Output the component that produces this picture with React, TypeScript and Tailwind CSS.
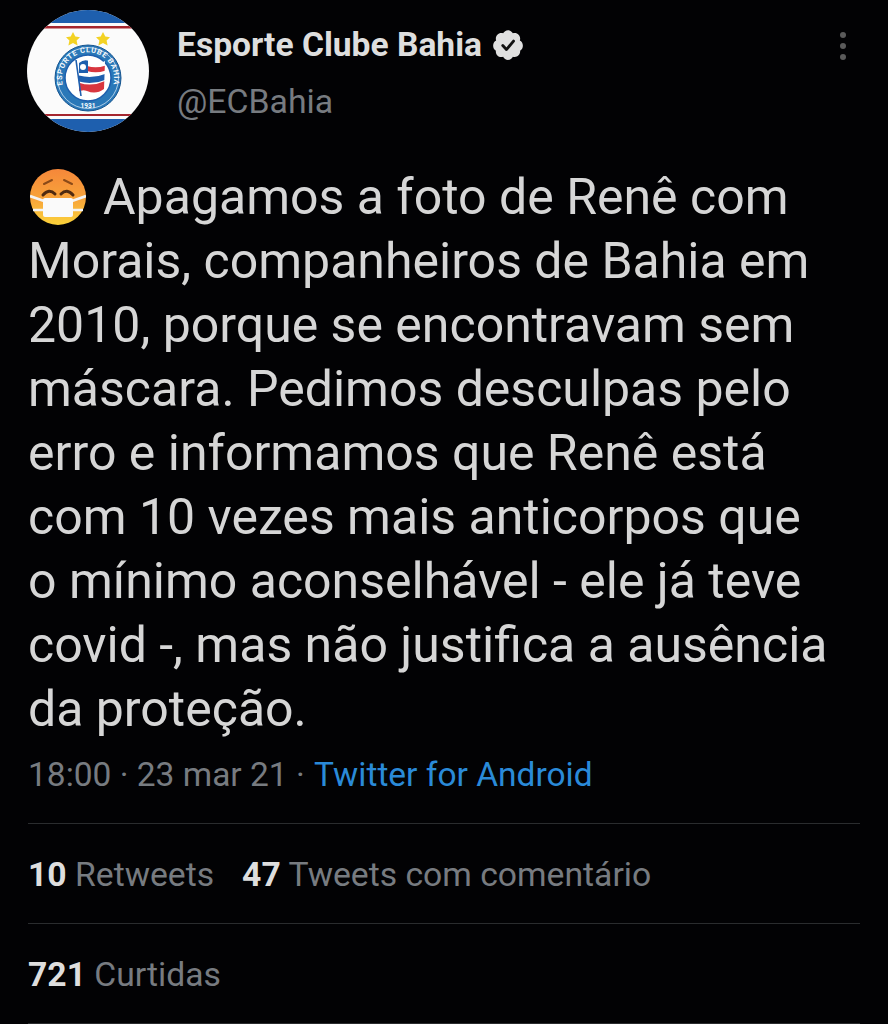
import React from 'react';

const tweetLines = [
  'Morais, companheiros de Bahia em',
  '2010, porque se encontravam sem',
  'máscara. Pedimos desculpas pelo',
  'erro e informamos que Renê está',
  'com 10 vezes mais anticorpos que',
  'o mínimo aconselhável - ele já teve',
  'covid -, mas não justifica a ausência',
  'da proteção.',
];

const Avatar = () => (
  <svg width="122" height="122" viewBox="0 0 122 122" className="shrink-0">
    <defs>
      <clipPath id="disc">
        <circle cx="61" cy="61" r="61" />
      </clipPath>
      <clipPath id="flagClip">
        <path d="M52 53 Q58 48 64 52 Q72 55 78 51 L77 79 Q69 85 60 81 Q55 79 52 82 Z" />
      </clipPath>
      <path id="ring" d="M43 87 A26 26 0 1 1 79 87" />
    </defs>
    <g clipPath="url(#disc)">
      <rect width="122" height="122" fill="#fbfbfb" />
      <rect width="122" height="13" fill="#1e5fae" />
      <rect y="16" width="122" height="2.5" fill="#a5262f" />
      <rect y="104" width="122" height="2" fill="#a5262f" />
      <rect y="109" width="122" height="13" fill="#1e5fae" />
    </g>
    <polygon points="46,22 48.3,26.6 53,27.2 49.6,30.6 50.6,35.5 46,33 41.4,35.5 42.4,30.6 39,27.2 43.7,26.6" fill="#f3d224" />
    <polygon points="76,22 78.3,26.6 83,27.2 79.6,30.6 80.6,35.5 76,33 71.4,35.5 72.4,30.6 69,27.2 73.7,26.6" fill="#f3d224" />
    <circle cx="61" cy="68" r="33" fill="#2a78b8" stroke="#17558f" strokeWidth="1" />
    <circle cx="61" cy="68" r="30.5" fill="none" stroke="#cfe2f0" strokeWidth="0.8" />
    <circle cx="61" cy="68" r="23" fill="#fff" stroke="#1e5fae" strokeWidth="1.5" />
    <text fontFamily="Roboto, sans-serif" fontSize="7.5" fontWeight="700" fill="#f2f6fa" letterSpacing="0.7" textAnchor="middle">
      <textPath href="#ring" startOffset="50%">ESPORTE CLUBE BAHIA</textPath>
    </text>
    <text x="61" y="98" textAnchor="middle" fontFamily="Roboto, sans-serif" fontSize="6.5" fontWeight="700" fill="#fff">1931</text>
    <g clipPath="url(#flagClip)">
      <rect x="50" y="46" width="30" height="42" fill="#fff" />
      <path d="M50 65 Q65 70 80 63 L80 69 Q65 76 50 71 Z" fill="#1e5fae" />
      <path d="M50 72 Q65 78 80 70 L80 79 Q65 88 50 80 Z" fill="#d8363f" />
      <path d="M60 56 Q70 59 80 55 L80 60 Q70 64 60 61 Z" fill="#d8363f" />
      <rect x="50" y="46" width="11" height="17" fill="#1e5fae" />
      <circle cx="56" cy="57" r="3" fill="#fff" />
    </g>
    <path d="M49 50 L54 86" stroke="#1e5fae" strokeWidth="1.6" />
  </svg>
);

const MaskEmoji = () => (
  <svg width="56" height="56" viewBox="0 0 56 56" className="shrink-0">
    <defs>
      <linearGradient id="face" x1="0" y1="0" x2="0" y2="1">
        <stop offset="0" stopColor="#f5873a" />
        <stop offset="0.55" stopColor="#f8a53a" />
        <stop offset="1" stopColor="#fbd23a" />
      </linearGradient>
    </defs>
    <circle cx="28" cy="28" r="28" fill="url(#face)" />
    <path d="M14 15 L22 11 M34 11 L42 15" stroke="#8a4a18" strokeWidth="2" strokeLinecap="round" fill="none" />
    <path d="M13 26 Q19 19 25 25 M31 25 Q37 19 43 26" stroke="#4f2a10" strokeWidth="3" strokeLinecap="round" fill="none" />
    <path d="M0 27 L14 32 M56 27 L42 32 M3 41 L14 41 M53 41 L42 41" stroke="#f4f4f4" strokeWidth="2.6" />
    <rect x="13" y="29" width="30" height="19" rx="2" fill="#fafafa" />
  </svg>
);

const Verified = () => (
  <svg width="34" height="34" viewBox="0 0 24 24" className="shrink-0">
    <path
      fill="#e0e0e0"
      d="M22.5 12.5c0-1.58-.875-2.95-2.148-3.6.154-.435.238-.905.238-1.4 0-2.21-1.71-3.998-3.818-3.998-.47 0-.92.084-1.336.25C14.818 2.415 13.51 1.5 12 1.5s-2.816.917-3.437 2.25c-.415-.165-.866-.25-1.336-.25-2.11 0-3.818 1.79-3.818 4 0 .494.083.964.237 1.4-1.272.65-2.147 2.018-2.147 3.6 0 1.495.782 2.798 1.942 3.486-.02.17-.032.34-.032.514 0 2.21 1.708 4 3.818 4 .47 0 .92-.086 1.335-.25.62 1.334 1.926 2.25 3.437 2.25 1.512 0 2.818-.916 3.437-2.25.415.163.865.248 1.336.248 2.11 0 3.818-1.79 3.818-4 0-.174-.012-.344-.033-.513 1.158-.687 1.943-1.99 1.943-3.484z"
    />
    <path fill="none" stroke="#111" strokeWidth="2" strokeLinecap="round" strokeLinejoin="round" d="M8.3 12.4l2.6 2.8 5-6" />
  </svg>
);

export default function App() {
  return (
    <div className="w-[888px] h-[1024px] overflow-hidden bg-[#020204] font-['Roboto',sans-serif] flex flex-col">
      {/* Header */}
      <div className="flex items-start pl-[27px] pr-[42px] pt-[10px]">
        <Avatar />
        <div className="ml-[28px] flex-1 pt-[15px]">
          <div className="flex items-center gap-[9px] h-[40px]">
            <span className="text-[33.6px] font-bold text-[#dedede] leading-[40px]">Esporte Clube Bahia</span>
            <Verified />
          </div>
          <div className="text-[33.8px] leading-[40px] mt-[17px] text-[#777b80]">@ECBahia</div>
        </div>
        <div className="flex flex-col gap-[5px] mt-[22px]">
          <span className="w-[6px] h-[6px] rounded-full bg-[#5a5a5a]" />
          <span className="w-[6px] h-[6px] rounded-full bg-[#5a5a5a]" />
          <span className="w-[6px] h-[6px] rounded-full bg-[#5a5a5a]" />
        </div>
      </div>

      {/* Tweet body */}
      <div className="pl-[28px] mt-[33px] text-[50px] leading-[64px] text-[#d6d6d6] whitespace-nowrap">
        <div className="flex items-center gap-[17px] pl-[2px]">
          <MaskEmoji />
          <span>Apagamos a foto de Renê com</span>
        </div>
        {tweetLines.map((line) => (
          <div key={line}>{line}</div>
        ))}
      </div>

      {/* Meta */}
      <div className="pl-[28px] mt-[13px] text-[33.5px] leading-[42px] text-[#777b80] whitespace-nowrap">
        18:00 · 23 mar 21 · <span className="ml-[1px] text-[#2a8ad8]">Twitter for Android</span>
      </div>

      {/* Stats */}
      <div className="mx-[28px] mt-[27px] border-t border-[#2a2c2e] h-[100px] pt-[4px] flex items-center gap-[28px] text-[33.7px] text-[#777b80] whitespace-nowrap">
        <span><b className="font-bold text-[#dedede]">10</b> Retweets</span>
        <span><b className="font-bold text-[#dedede]">47</b> Tweets com comentário</span>
      </div>
      <div className="mx-[28px] border-t border-[#2a2c2e] h-[100px] pt-[4px] flex items-center text-[33.7px] text-[#777b80] whitespace-nowrap">
        <span><b className="font-bold text-[#dedede]">721</b> Curtidas</span>
      </div>
      <div className="mx-[28px] border-t border-[#2a2c2e]" />
    </div>
  );
}
